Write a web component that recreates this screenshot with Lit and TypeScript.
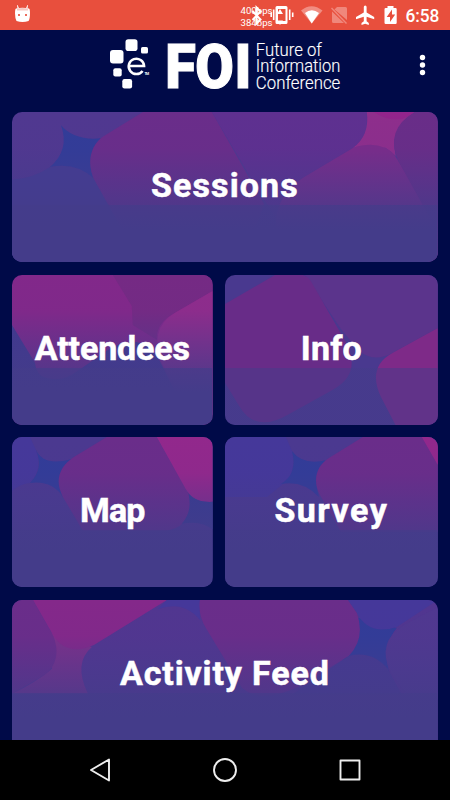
import { LitElement, html, css, svg } from "lit";
import { customElement, property } from "lit/decorators.js";
import { styleMap } from "lit/directives/style-map.js";

interface Shape {
  fill: string;
  d: string;
}

interface Tile {
  id: string;
  label: string;
  width: number;
  wide?: boolean;
  spacing: number;
  base: string;
  shapes: Shape[];
  fade: "soft" | "step";
}

const BLUE = "#323c98";
const PLUM = "#503890";
const MAGENTA = "#6a2d8a";
const INDIGO = "#45389a";

const tiles: Tile[] = [
  {
    id: "sessions",
    label: "Sessions",
    width: 426,
    wide: true,
    spacing: 1.1,
    base: PLUM,
    fade: "soft",
    shapes: [
      { fill: "#443c92", d: "M0 68Q22 66 38 55Q66 50 81 66L108 115V151H0Z" },
      { fill: BLUE, d: "M49 13C56 23 74 29 90 26Q74 44 81 66Q64 50 38 55Q58 38 49 13Z" },
      { fill: MAGENTA, d: "M131 0L92 24C78 33 74 52 83 69L124 142H236L252 92L200 0Z" },
      { fill: "#5e3090", d: "M200 0H355V10Q354 28 341 36L291 66Q265 84 266 110L236 61Z" },
      { fill: "#7a2c8a", d: "M341 36Q365 26 382 42L426 110V150H264V110Q265 84 291 66Z" },
      { fill: "#8e2e8c", d: "M355 0H403Q377 17 384 44Q368 27 341 36Q358 24 355 0Z" },
      { fill: "#92248c", d: "M362 0H403Q397 5 390 7Q375 9 362 0Z" },
      { fill: "#692d88", d: "M403 0H426V120L387 50Q372 18 403 0Z" },
    ],
  },
  {
    id: "attendees",
    label: "Attendees",
    width: 201,
    spacing: -0.15,
    base: "#82288a",
    fade: "soft",
    shapes: [
      { fill: "#752a84", d: "M101 0H201V16L163 38Q144 48 145 65L121 50L120 31Z" },
      { fill: "#8f2c8c", d: "M201 16L163 38Q136 54 151 90L180 140H201Z" },
      { fill: "#40388e", d: "M0 50L23 88Q25 104 40 105H0Z" },
      { fill: "#403890", d: "M23 98Q46 112 66 96L98 74Q130 55 148 86L180 150H0V98Z" },
    ],
  },
  {
    id: "info",
    label: "Info",
    width: 213,
    spacing: 0.2,
    base: "#49398f",
    fade: "step",
    shapes: [
      { fill: "#5b348c", d: "M80 0H213V53L168 78Q150 88 135 77L116 54Z" },
      { fill: "#682c88", d: "M0 29L50 0H78Q84 2 87 8L119 64Q139 98 108 115L63 140Q30 159 14 131L0 108Z" },
      { fill: "#7e2a88", d: "M213 53L168 78Q142 92 156 122L171 151H213Z" },
    ],
  },
  {
    id: "map",
    label: "Map",
    width: 201,
    spacing: -0.9,
    base: "#4b3990",
    fade: "soft",
    shapes: [
      { fill: INDIGO, d: "M0 0H18L24 13Q31 33 18 46Q8 47 0 54Z" },
      { fill: BLUE, d: "M24 13Q32 30 60 22Q44 36 51 60Q40 43 18 46Q32 32 24 13Z" },
      { fill: MAGENTA, d: "M95 0L62 20C48 29 42 43 51 60L71 94H155Q184 88 177 57L145 0Z" },
      { fill: "#92288c", d: "M145 0L174 52Q182 66 201 65V0Z" },
      { fill: "#363b90", d: "M177 57Q185 66 201 65V93Q190 83 170 87Q181 75 177 57Z" },
    ],
  },
  {
    id: "survey",
    label: "Survey",
    width: 213,
    spacing: 1.5,
    base: "#4b3990",
    fade: "soft",
    shapes: [
      { fill: INDIGO, d: "M0 0H61L67 14Q72 38 58 47L42 60H0Z" },
      { fill: BLUE, d: "M67 14Q78 29 102 23Q87 36 94 60Q78 43 56 47Q73 37 67 14Z" },
      { fill: MAGENTA, d: "M138 0L104 21C90 30 88 45 95 58L116 95H213V0Z" },
      { fill: "#92288c", d: "M197 0L213 28V0Z" },
    ],
  },
  {
    id: "feed",
    label: "Activity Feed",
    width: 426,
    wide: true,
    spacing: 0.85,
    base: "#513690",
    fade: "soft",
    shapes: [
      { fill: "#7c308a", d: "M36 32L80 47Q61 63 76 94H0Q22 84 40 69Z" },
      { fill: MAGENTA, d: "M0 0H21L41 35Q51 60 33 75L0 94Z" },
      { fill: "#84288a", d: "M21 0H155L82 45Q55 57 41 35Z" },
      { fill: INDIGO, d: "M155 0H188V20Q172 0 146 9Z" },
      { fill: BLUE, d: "M336 15L385 28Q370 45 378 75Q358 52 330 60Z" },
      { fill: INDIGO, d: "M336 0H426L385 27Q357 36 345 13Z" },
      { fill: PLUM, d: "M426 7L392 25Q364 42 379 73L398 100H426Z" },
      { fill: MAGENTA, d: "M188 0H336L345 13Q354 38 337 56L285 88Q247 104 230 88L194 28Q186 15 188 0Z" },
      { fill: "#463990", d: "M337 56Q360 50 376 69L390 95H280Z" },
    ],
  },
];

@customElement("tile-art")
class TileArt extends LitElement {
  @property({ attribute: false }) tile!: Tile;

  static styles = css`
    :host { display: block; width: 100%; height: 100%; }
    svg { display: block; width: 100%; height: 100%; }
  `;

  render() {
    const t = this.tile;
    const stops = t.fade === "soft"
      ? svg`<stop offset="0" stop-color="#443c8a" stop-opacity="0"/>
            <stop offset=".24" stop-color="#443c8a" stop-opacity=".04"/>
            <stop offset=".44" stop-color="#443c8c" stop-opacity=".38"/>
            <stop offset=".62" stop-color="#443c8a" stop-opacity=".68"/>
            <stop offset=".62" stop-color="#443c8a" stop-opacity=".9"/>
            <stop offset=".78" stop-color="#443c8a" stop-opacity="1"/>`
      : svg`<stop offset=".62" stop-color="#443c8a" stop-opacity="0"/>
            <stop offset=".62" stop-color="#443c8a" stop-opacity=".5"/>
            <stop offset="1" stop-color="#443c8a" stop-opacity=".5"/>`;
    return html`<svg viewBox="0 0 ${t.width} 150.5" preserveAspectRatio="none" aria-hidden="true">
      <defs><linearGradient id="fade" x1="0" y1="0" x2="0" y2="1">${stops}</linearGradient></defs>
      <rect width=${t.width} height="151" fill=${t.base}></rect>
      ${t.shapes.map((s) => svg`<path fill=${s.fill} d=${s.d}/>`)}
      <rect width=${t.width} height="151" fill="url(#fade)"></rect>
    </svg>`;
  }
}

@customElement("status-bar")
class StatusBar extends LitElement {
  static styles = css`
    :host { display: block; height: 30px; background: #e84f3d; }
    svg { display: block; }
    text { font-family: Roboto, sans-serif; fill: #fff; }
    .rate { font-size: 9.5px; }
    .clock { font-size: 17.5px; font-weight: 500; }
  `;

  render() {
    return html`<svg width="450" height="30" viewBox="0 0 450 30" fill="#fff">
      <path d="M17.6 5L19 8.3H26L27.4 5L28 5.3L27.4 9H17.6L17 5.3Z"/>
      <path d="M16 8.6Q22.500 7 29 8.600Q30 9 30 13Q30 19 28.600 21Q22.500 23 16.500 21Q15 18 15 13Q15 9 16 8.600Z"/>
      <path d="M17 8.600Q22.500 7.500 28 8.600V10.500H17Z" fill="#f7c8c2"/>
      <path d="M18 14h2v2h-2zM25 14h2v2h-2z" fill="#ed6c5d"/>
      <text class="rate" x="240.500" y="14" textLength="32" lengthAdjust="spacingAndGlyphs">400bps</text>
      <text class="rate" x="240.500" y="26" textLength="32" lengthAdjust="spacingAndGlyphs">384bps</text>
      <path d="M252.500 11L260.500 19.500L256.500 23.500V7.500L260.500 11.500L252.500 20" fill="none" stroke="#fff" stroke-width="2"/>
      <path d="M277 6h9q1.500 0 1.500 1.500v15q0 1.500-1.500 1.500h-9q-1.500 0-1.500-1.500v-15q0-1.500 1.500-1.500zM278 9v12h7.500V9z" fill-rule="evenodd"/>
      <path d="M280 9l-3 5h6zM280 25l-3-4.500h6z"/>
      <path d="M273.700 9.500v10.500M271.200 12.500v4.500M289.700 9.500v10.500M292.700 12.500v4.500" fill="none" stroke="#fff" stroke-width="1.600"/>
      <path d="M301 10.500Q311.500 2 322.500 10.500L311.700 23.500Z" fill="#f18d82"/>
      <path d="M305 13Q311.700 7.500 319 13L311.700 23.500Z"/>
      <path d="M337 7h8.500q1.500 0 1.500 1.500V20L334.500 9.500zM332 11.500L344 23H333.500q-1.500 0-1.500-1.500z" fill="#f0877b"/>
      <path d="M331.500 8L346.500 23.500" fill="none" stroke="#f0877b" stroke-width="1.400"/>
      <path d="M365.200 5.500q1.400 0 1.400 1.500v5.500l7.600 4.500v2.200l-7.600-2.400v4.500l2.200 1.700V25l-3.600-1.200L361.500 25v-2l2.300-1.700v-4.500l-7.800 2.400V17l7.800-4.500V7q0-1.500 1.400-1.500z"/>
      <path d="M387.500 6h6v2h2q1.200 0 1.200 1.200v13.600q0 1.200-1.200 1.200h-9.800q-1.200 0-1.200-1.200V9.200q0-1.200 1.200-1.200h1.800z"/>
      <path d="M392 9.500L386.700 17H390v5L395.200 14.500H392Z" fill="#e84f3d"/>
      <text class="clock" x="405.400" y="21.700" textLength="34" lengthAdjust="spacingAndGlyphs">6:58</text>
    </svg>`;
  }
}

@customElement("conference-header")
class ConferenceHeader extends LitElement {
  static styles = css`
    :host { display: block; height: 82px; }
    svg { display: block; }
    .mark { font: 900 62px Roboto, sans-serif; stroke: #fff; stroke-width: 1.200px; }
    .name { font: 300 17.500px Roboto, sans-serif; stroke: #fff; stroke-width: .15px; }
    .tm { font: 700 3.500px Roboto, sans-serif; }
  `;

  render() {
    return html`<svg width="450" height="82" viewBox="0 30 450 82" fill="#fff">
      <rect x="125.500" y="39.300" width="12" height="11.800" rx="2.800"></rect>
      <rect x="141" y="47" width="7" height="6.500" rx="1.600"></rect>
      <rect x="110" y="50" width="13.500" height="13.500" rx="3"></rect>
      <rect x="113.300" y="68.200" width="8.400" height="8.400" rx="2"></rect>
      <rect x="122.300" y="79" width="9.800" height="9.500" rx="2.200"></rect>
      <path d="M128.700 66H144.100A7.700 7.700 0 1 0 142.600 71" fill="none" stroke="#fff" stroke-width="2.500"/>
      <text class="tm" x="144.500" y="75" textLength="4.500">TM</text>
      <text class="mark" transform="scale(.9 1)" y="87.700" x="183.700 217 260.700">FOI</text>
      <text class="name" x="255.800" y="55.500" textLength="66" lengthAdjust="spacingAndGlyphs">Future of</text>
      <text class="name" x="255.800" y="72.200" textLength="84.500" lengthAdjust="spacingAndGlyphs">Information</text>
      <text class="name" x="255.800" y="88.500" textLength="84.500" lengthAdjust="spacingAndGlyphs">Conference</text>
      <circle cx="422.500" cy="57.500" r="2.700"></circle>
      <circle cx="422.500" cy="65" r="2.700"></circle>
      <circle cx="422.500" cy="72.500" r="2.700"></circle>
    </svg>`;
  }
}

@customElement("app-root")
class AppRoot extends LitElement {
  static styles = css`
    :host {
      display: flex; flex-direction: column; width: 450px; height: 800px;
      overflow: hidden; background: #000a48; color: #fff;
      font-family: Roboto, sans-serif;
    }
    status-bar, conference-header, .nav { flex: none; }
    .board {
      flex: 1; min-height: 0; overflow: hidden;
      display: grid; grid-template-columns: 200.600px 212.800px;
      grid-auto-rows: 150.200px; gap: 12.400px; padding: 0 12px;
      align-content: start; box-sizing: border-box;
    }
    .tile {
      display: grid; border-radius: 10px; overflow: hidden;
      padding: 0; border: 0; background: none; color: inherit;
    }
    .tile > * { grid-area: 1 / 1; min-width: 0; min-height: 0; }
    .wide { grid-column: span 2; }
    .label {
      place-self: center; z-index: 1; font: 700 34px/40px Roboto, sans-serif;
      white-space: nowrap; padding-bottom: 4px; -webkit-text-stroke: .5px #fff;
    }
    .nav { height: 60px; background: #000; display: flex; justify-content: center; gap: 101px; align-items: center; }
    .nav svg { width: 24px; height: 24px; fill: none; stroke: #eee; stroke-width: 1.900px; stroke-linejoin: round; }
  `;

  render() {
    return html`
      <status-bar></status-bar>
      <conference-header></conference-header>
      <main class="board">
        ${tiles.map((t) => html`
          <button class="tile ${t.wide ? "wide" : ""}">
            <tile-art .tile=${t}></tile-art>
            <span class="label" style=${styleMap({ letterSpacing: `${t.spacing}px` })}>${t.label}</span>
          </button>`)}
      </main>
      <nav class="nav">
        <svg viewBox="0 0 24 24"><path d="M3 12L21 1.500V22.500Z"/></svg>
        <svg viewBox="0 0 24 24"><circle cx="12" cy="12" r="11"/></svg>
        <svg viewBox="0 0 24 24"><rect x="2.500" y="2.500" width="19" height="19"/></svg>
      </nav>
    `;
  }
}
